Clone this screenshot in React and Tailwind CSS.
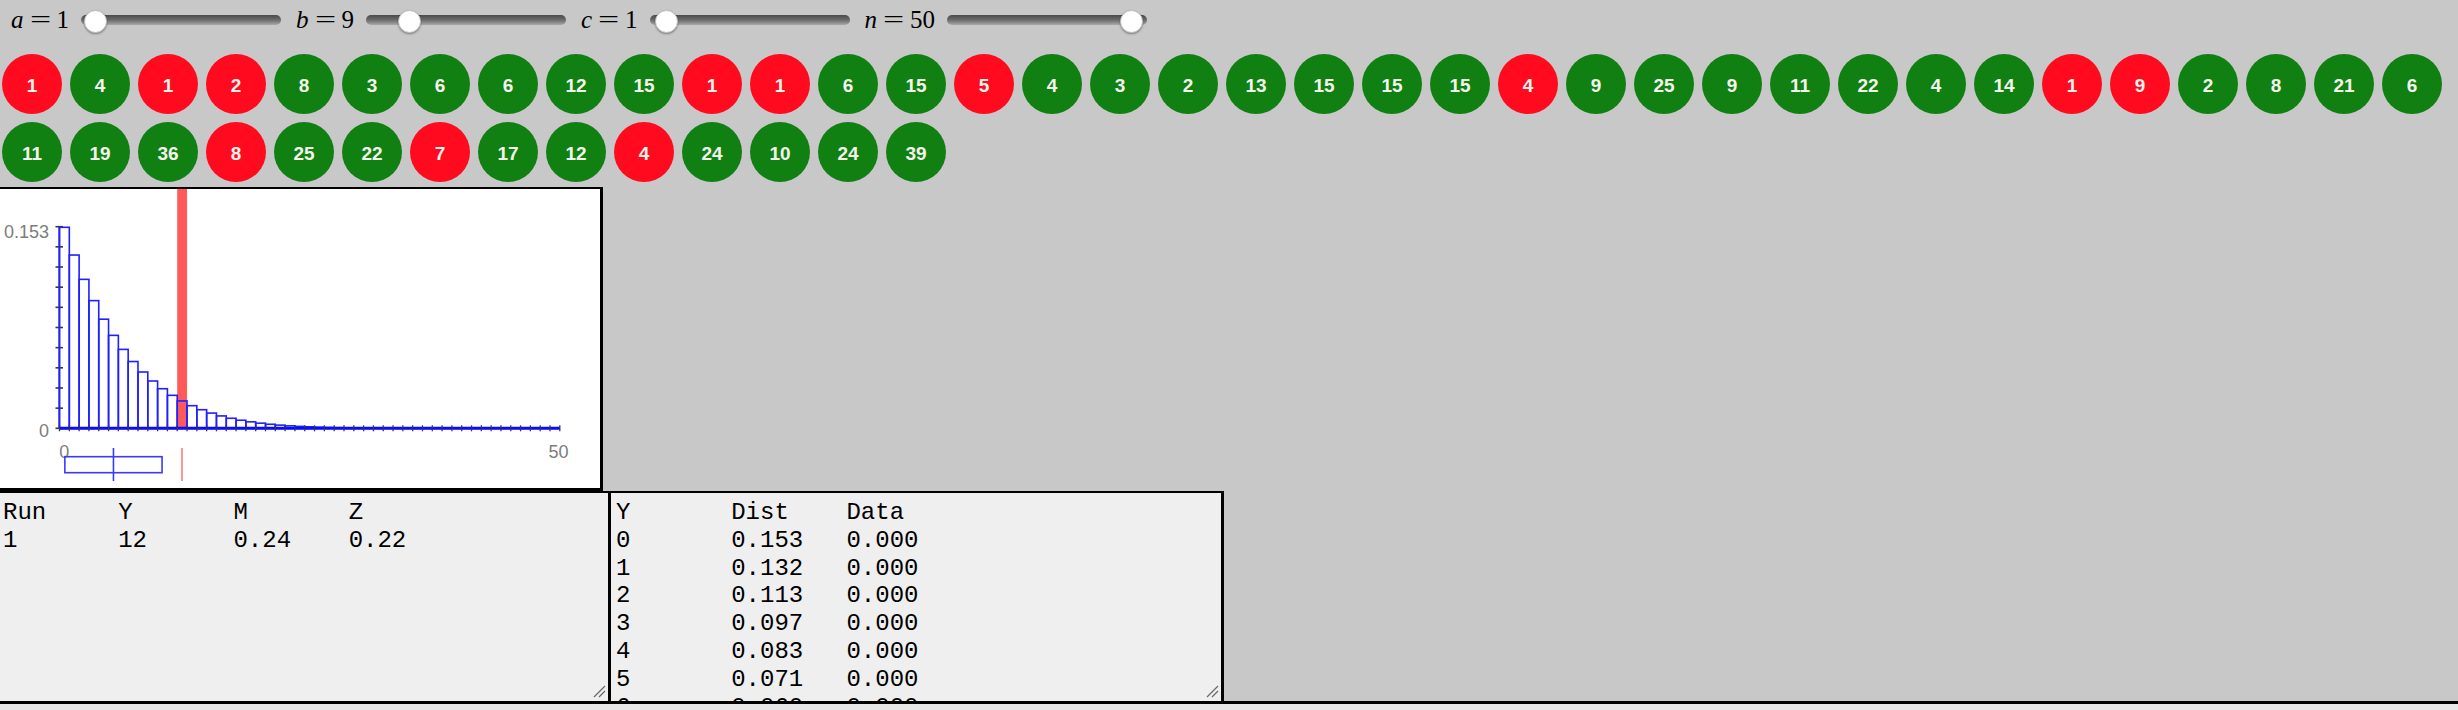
import React from "react";

// a, b, c, n parameters of the Pólya urn / beta-binomial demo
const params = [
  { name: "a", value: "1", ml: "ml-[11px]", thumb: 3 },
  { name: "b", value: "9", ml: "ml-[15px]", thumb: 32 },
  { name: "c", value: "1", ml: "ml-[15px]", thumb: 5 },
  { name: "n", value: "50", ml: "ml-[15px]", thumb: 173 },
];

const balls = [
  1, 4, 1, 2, 8, 3, 6, 6, 12, 15, 1, 1, 6, 15, 5, 4, 3, 2, 13, 15, 15, 15, 4, 9, 25, 9, 11, 22, 4, 14, 1, 9, 2, 8,
  21, 6, 11, 19, 36, 8, 25, 22, 7, 17, 12, 4, 24, 10, 24, 39,
];
const red = [0, 2, 3, 10, 11, 14, 22, 30, 31, 39, 42, 45];

const N = 50;
const A = 1;
const B = 9;

// beta-binomial pmf
const pmf = (() => {
  const p = [B / (N + B)];
  for (let k = 0; k < N; k++) {
    p.push(p[k] * ((N - k) / (k + 1)) * ((k + A) / (N - k - 1 + B)));
  }
  return p;
})();

const Slider = ({ thumb }) => (
  <div className="relative ml-[12px] h-[10px] w-[200px] rounded-full bg-gradient-to-b from-[#4a4a4a] via-[#6c6c6c] to-[#a9a9a9]">
    <div
      className="absolute top-[-5px] h-[23px] w-[23px] rounded-full border border-[#bdbdbd] bg-white shadow-[0_1px_2px_rgba(0,0,0,0.35)]"
      style={{ left: thumb }}
    />
  </div>
);

const Chart = () => {
  const x0 = 59.5;
  const bw = 9.81;
  const base = 239.3;
  const sc = 1317.6;
  const xOf = (v) => x0 + (v + 0.5) * bw;
  const mean = (N * A) / (A + B);
  const sd = Math.sqrt((N * A * B * (A + B + N)) / ((A + B) ** 2 * (A + B + 1)));

  return (
    <svg width="600" height="299" className="block">
      {/* observed value */}
      <rect x={xOf(12) - bw / 2} y="0" width={bw} height={base} fill="#ff0000" opacity="0.65" />
      {pmf.map((p, k) => (
        <rect
          key={k}
          x={x0 + k * bw}
          y={base - p * sc}
          width={bw}
          height={p * sc}
          fill="none"
          stroke="#2020ff"
          strokeWidth="1.6"
        />
      ))}
      <line x1="59.3" y1="37.7" x2="59.3" y2={base} stroke="#2020ff" strokeWidth="1.8" />
      {Array.from({ length: 11 }, (_, i) => (
        <line key={i} x1="55.5" x2="63" y1={base - i * 20.16} y2={base - i * 20.16} stroke="#333366" strokeWidth="1.6" />
      ))}
      <line x1="59.3" y1={base} x2="560" y2={base} stroke="#0a0aff" strokeWidth="3" />
      {Array.from({ length: 52 }, (_, i) => (
        <line key={i} x1={x0 + i * bw} x2={x0 + i * bw} y1={base - 3} y2={base + 3} stroke="#333366" strokeWidth="1.3" />
      ))}
      <g fontFamily="Liberation Sans, Arial, sans-serif" fontSize="18" fill="#7d7d7d">
        <text x="49" y="49" textAnchor="end">0.153</text>
        <text x="49" y="247.5" textAnchor="end">0</text>
        <text x="64.3" y="269" textAnchor="middle">0</text>
        <text x="558.5" y="269" textAnchor="middle">50</text>
      </g>
      <rect x={xOf(mean - sd)} y="267.7" width={xOf(mean + sd) - xOf(mean - sd)} height="16" fill="none" stroke="#3a3aff" strokeWidth="1.6" />
      <line x1={xOf(mean)} x2={xOf(mean)} y1="259" y2="292" stroke="#3a3aff" strokeWidth="1.6" />
      <line x1="182" x2="182" y1="259" y2="292" stroke="#ff7b7b" strokeWidth="1.6" />
    </svg>
  );
};

const Grip = () => (
  <svg width="14" height="14" className="absolute bottom-[3px] right-[2px]">
    <line x1="2" y1="13" x2="13" y2="2" stroke="#6a6a6a" strokeWidth="1.2" />
    <line x1="7" y1="13" x2="13" y2="7" stroke="#6a6a6a" strokeWidth="1.2" />
  </svg>
);

const TextPanel = ({ lines, className }) => (
  <div
    className={`relative h-[210px] overflow-hidden border-t-2 border-r-[3px] border-black bg-[#efefef] pt-[6px] text-[24px] leading-[27.8px] text-black ${className}`}
    style={{ fontFamily: '"Liberation Mono", "Courier New", monospace' }}
  >
    <pre className="m-0 whitespace-pre [tab-size:8]" style={{ fontFamily: "inherit" }}>
      {lines.join("\n")}
    </pre>
    <Grip />
  </div>
);

export default function App() {
  const distLines = ["Y\tDist\tData", ...pmf.slice(0, 12).map((p, k) => `${k}\t${p.toFixed(3)}\t0.000`)];

  return (
    <div className="flex h-[710px] w-full flex-col overflow-hidden bg-[#c8c8c8]">
      <div
        className="flex h-[40px] items-center text-[25px] text-black"
        style={{ fontFamily: '"Liberation Serif", "Times New Roman", serif' }}
      >
        {params.map((p) => (
          <React.Fragment key={p.name}>
            <span className={`${p.ml} flex items-baseline leading-[40px]`}>
              <i>{p.name}</i>
              <span className="mx-[6px] inline-block w-[21px] scale-x-150 text-center">=</span>
              <span>{p.value}</span>
            </span>
            <Slider thumb={p.thumb} />
          </React.Fragment>
        ))}
      </div>

      <div
        className="mt-[14px] flex flex-wrap gap-[8px] pl-[2px]"
        style={{ fontFamily: '"Liberation Sans", Arial, sans-serif' }}
      >
        {balls.map((v, i) => (
          <div
            key={i}
            className={`flex h-[60px] w-[60px] items-center justify-center rounded-full pt-[4px] text-[19px] font-bold text-[#f4f4ec] ${
              red.includes(i) ? "bg-[#ff0a1e]" : "bg-[#108012]"
            }`}
          >
            {v}
          </div>
        ))}
      </div>

      <div className="mt-[5px] h-[304px] w-[603px] border-t-2 border-r-[3px] border-b-[3px] border-black bg-white">
        <Chart />
      </div>

      <div className="flex">
        <TextPanel className="w-[611px] pl-[3px]" lines={["Run\tY\tM\tZ", "1\t12\t0.24\t0.22"]} />
        <TextPanel className="w-[613px] pl-[5px]" lines={distLines} />
      </div>

      <div className="flex-1 border-t-[3px] border-black bg-[#e7e7e7]" />
    </div>
  );
}
